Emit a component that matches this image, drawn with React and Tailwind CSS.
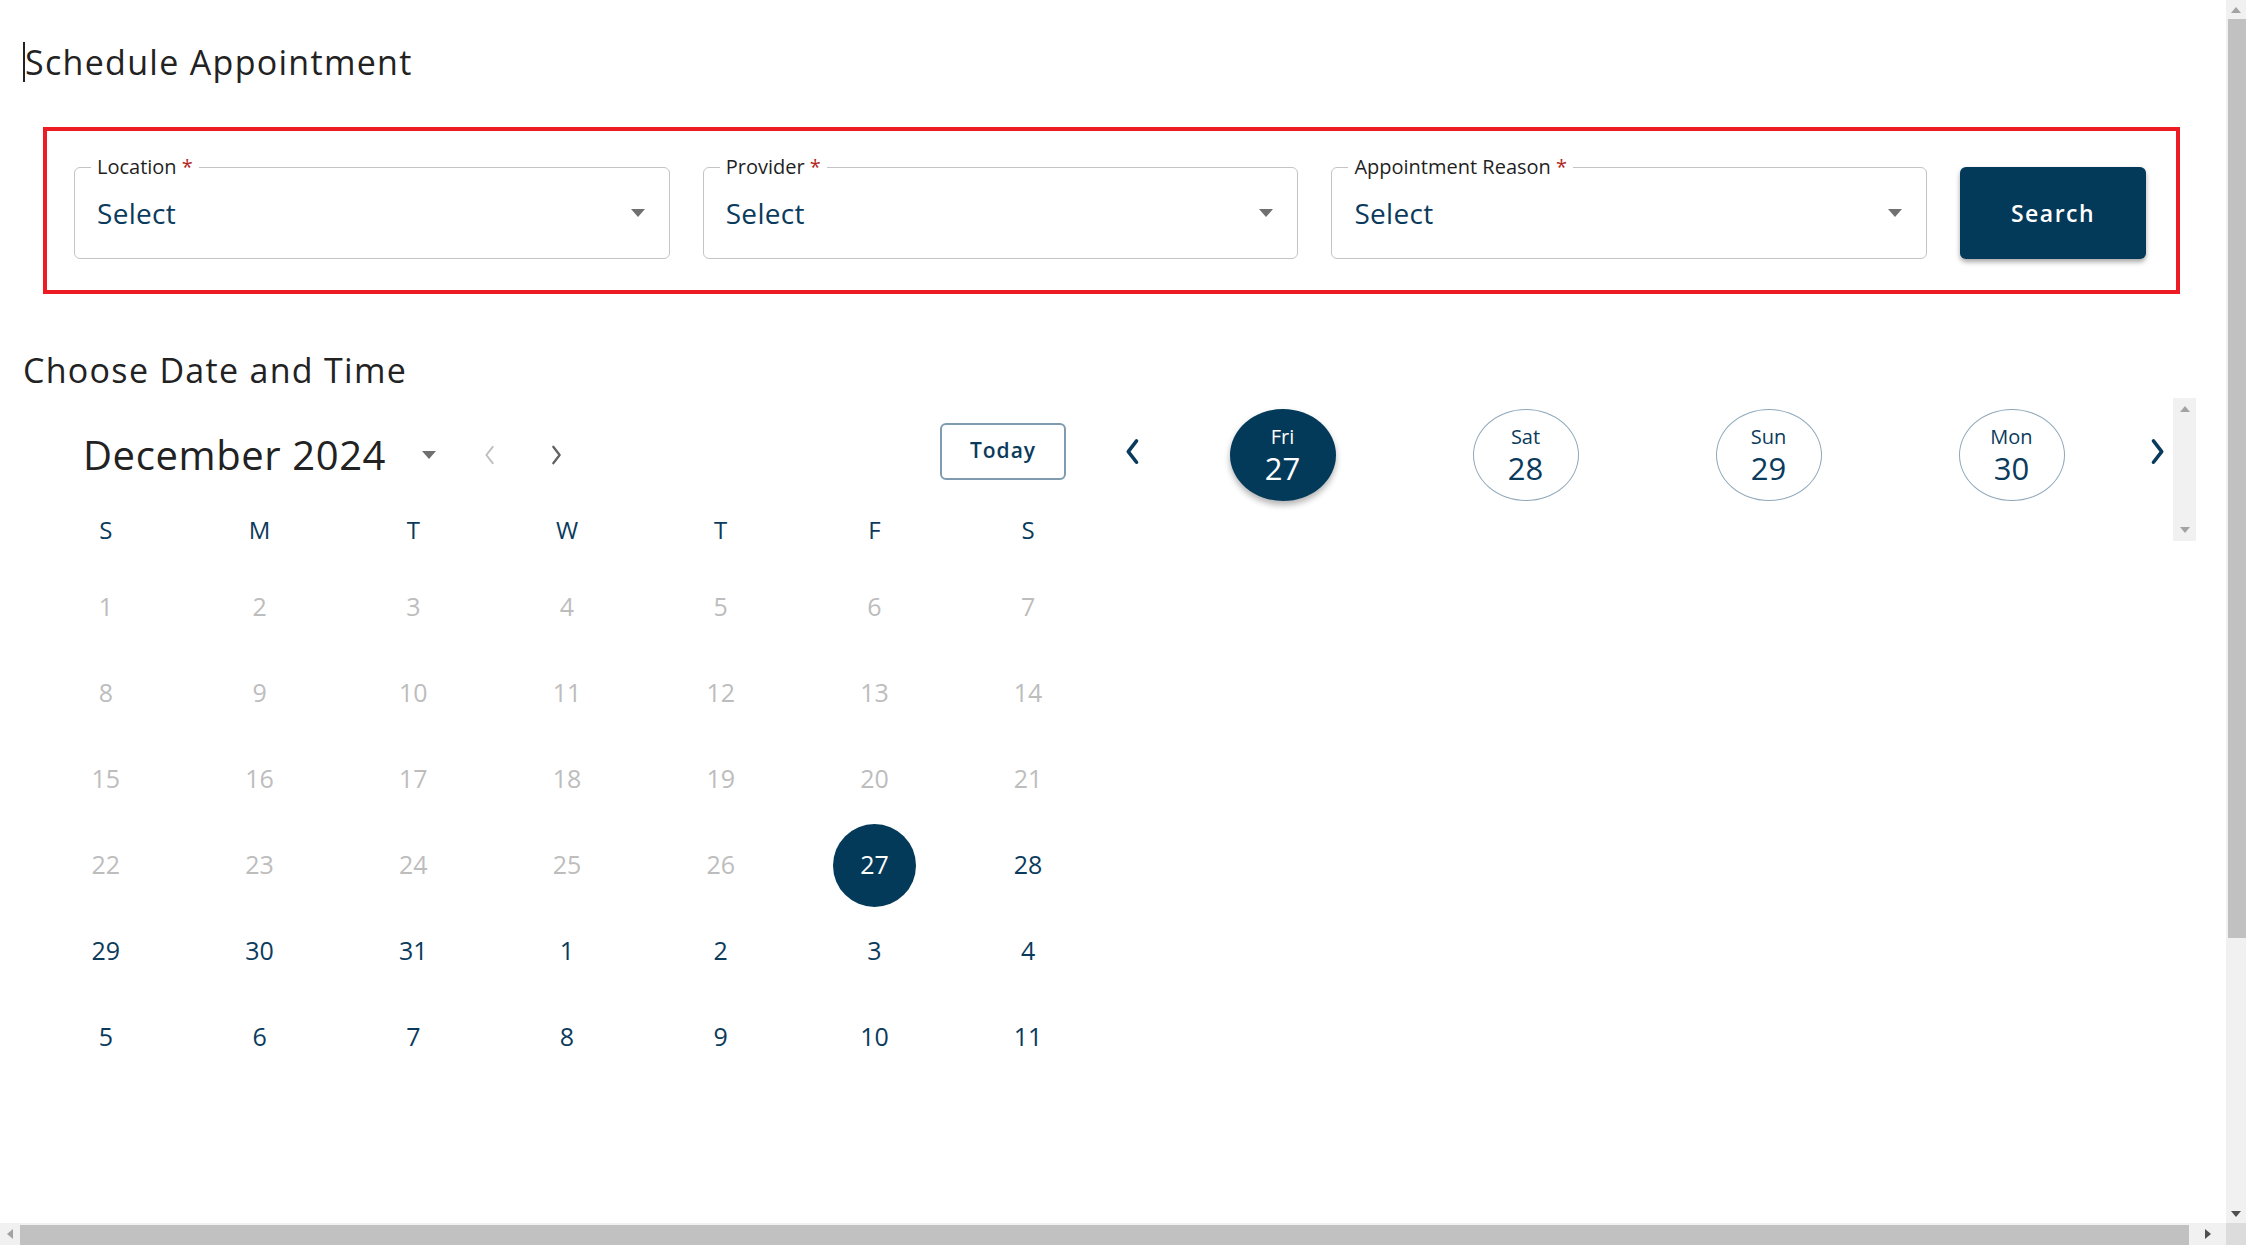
import React from 'react';

const NAVY = 'text-[#0b3b5c]';
const font = { fontFamily: '"Open Sans", "Noto Sans", sans-serif' };

const weeks = [
  [1, 2, 3, 4, 5, 6, 7],
  [8, 9, 10, 11, 12, 13, 14],
  [15, 16, 17, 18, 19, 20, 21],
  [22, 23, 24, 25, 26, 27, 28],
  [29, 30, 31, 1, 2, 3, 4],
  [5, 6, 7, 8, 9, 10, 11],
];

const strip = [
  { day: 'Fri', num: 27, active: true },
  { day: 'Sat', num: 28 },
  { day: 'Sun', num: 29 },
  { day: 'Mon', num: 30 },
];

function Caret({ className = '' }) {
  return (
    <svg width="14" height="8" viewBox="0 0 14 8" className={className}>
      <path d="M0 0 L14 0 L7 8 Z" fill="#707070" />
    </svg>
  );
}

function Chevron({ dir = 'left', color, size = 20, stroke = 2 }) {
  const d = dir === 'left' ? 'M14 3 L7 12 L14 21' : 'M8 3 L15 12 L8 21';
  return (
    <svg width={size} height={size * 1.2} viewBox="0 0 22 24">
      <path d={d} fill="none" stroke={color} strokeWidth={stroke} strokeLinecap="round" strokeLinejoin="round" />
    </svg>
  );
}

function SelectField({ label }) {
  return (
    <div className="relative h-[92px] w-[596px] rounded-md border border-[#c4c4c4]">
      <span className="absolute left-[16px] top-[-14px] bg-white px-[6px] text-[20px] leading-[26px] text-[#1f1f1f]">
        {label} <span className="text-[#b3261e]">*</span>
      </span>
      <div className="flex h-full items-center justify-between pl-[22px] pr-[24px]">
        <span className={`text-[28px] tracking-[0.3px] ${NAVY}`}>Select</span>
        <Caret />
      </div>
    </div>
  );
}

export default function App() {
  return (
    <div className="flex h-[1245px] w-[2246px] flex-col overflow-hidden bg-white" style={font}>
      <div className="flex flex-1 overflow-hidden">
        <div className="flex-1 pl-[23px]">
          <div className="mt-[42px] h-[40px] border-l-2 border-[#222] text-[34px] leading-[40px] tracking-[1.3px] text-[#222]">
            Schedule Appointment
          </div>

          <div className="ml-[20px] mt-[45px] w-[2137px] border-4 border-[#ed1c24] pb-[31px] pl-[27px] pr-[30px] pt-[36px]">
            <div className="flex gap-[33px]">
              <SelectField label="Location" />
              <SelectField label="Provider" />
              <SelectField label="Appointment Reason" />
              <button className="h-[92px] w-[186px] rounded-md bg-[#033a5a] text-[23px] font-semibold tracking-[1.5px] text-white shadow-[0_3px_5px_rgba(0,0,0,0.35)]">
                Search
              </button>
            </div>
          </div>

          <div className="mt-[56px] h-[40px] text-[34px] leading-[40px] tracking-[1.3px] text-[#222]">Choose Date and Time</div>

          <div className="flex">
            <div className="ml-[6px] w-[1076px] pt-[25px]">
              <div className="flex h-[80px] items-center pl-[54px] pr-[39px]">
                <span className="text-[40px] tracking-[0.6px] text-[#222]">December 2024</span>
                <Caret className="ml-[36px]" />
                <div className="ml-[44px]">
                  <Chevron dir="left" color="#bdbdbd" size={20} stroke={2} />
                </div>
                <div className="ml-[46px]">
                  <Chevron dir="right" color="#616161" size={20} stroke={2.5} />
                </div>
                <button className={`mb-[8px] ml-auto h-[57px] w-[126px] rounded-md border-2 border-[#7f9bb0] text-[21px] font-semibold tracking-[1px] ${NAVY}`}>
                  Today
                </button>
              </div>

              <div className="grid h-[69px] grid-cols-7 items-center">
                {['S', 'M', 'T', 'W', 'T', 'F', 'S'].map((d, i) => (
                  <div key={i} className={`text-center text-[24px] ${NAVY}`}>{d}</div>
                ))}
              </div>

              {weeks.map((row, ri) => (
                <div key={ri} className="grid h-[86px] grid-cols-7">
                  {row.map((n, ci) => {
                    const disabled = ri < 3 || (ri === 3 && ci < 5);
                    const selected = ri === 3 && n === 27;
                    return (
                      <div key={ci} className="flex items-center justify-center">
                        {selected ? (
                          <div className="flex h-[83px] w-[83px] items-center justify-center rounded-full bg-[#033a5a] text-[25px] text-white">
                            {n}
                          </div>
                        ) : (
                          <span className={`text-[25px] ${disabled ? 'text-[#bdbdbd]' : 'text-[#0b3b5c]'}`}>{n}</span>
                        )}
                      </div>
                    );
                  })}
                </div>
              ))}
            </div>

            <div className="mt-[8px] flex h-[143px]">
              <div className="mt-[8px] flex h-[92px] w-[56px] items-center justify-center">
                <Chevron dir="left" color="#0b3b5c" size={26} stroke={3} />
              </div>
              {strip.map((s) => (
                <div key={s.num} className="mt-[11px] flex w-[243px] justify-center">
                  <div
                    className={`flex h-[92px] w-[106px] flex-col items-center justify-center rounded-[50%] ${
                      s.active
                        ? 'bg-[#033a5a] text-white shadow-[0_4px_6px_rgba(0,0,0,0.3)]'
                        : 'border border-[#8fa8ba] text-[#0b3b5c]'
                    }`}
                  >
                    <span className="text-[20px] leading-[26px]">{s.day}</span>
                    <span className="text-[31px] leading-[36px]">{s.num}</span>
                  </div>
                </div>
              ))}
              <div className="mt-[8px] flex h-[92px] w-[40px] items-center justify-center pl-[8px]">
                <Chevron dir="right" color="#0b3b5c" size={26} stroke={3} />
              </div>
              <div className="flex h-[143px] w-[23px] flex-col items-center justify-between bg-[#f1f1f1] py-[8px]">
                <svg width="10" height="6" viewBox="0 0 10 6"><path d="M0 6 L10 6 L5 0 Z" fill="#a3a3a3" /></svg>
                <svg width="10" height="6" viewBox="0 0 10 6"><path d="M0 0 L10 0 L5 6 Z" fill="#a3a3a3" /></svg>
              </div>
            </div>
          </div>
        </div>

        <div className="flex w-[20px] flex-col bg-[#f1f1f1]">
          <div className="flex h-[19px] items-center justify-center">
            <svg width="10" height="6" viewBox="0 0 10 6"><path d="M0 6 L10 6 L5 0 Z" fill="#a3a3a3" /></svg>
          </div>
          <div className="ml-[2px] h-[919px] bg-[#c1c1c1]" />
          <div className="flex-1" />
          <div className="flex h-[19px] items-center justify-center">
            <svg width="10" height="6" viewBox="0 0 10 6"><path d="M0 0 L10 0 L5 6 Z" fill="#505050" /></svg>
          </div>
        </div>
      </div>

      <div className="flex h-[22px] bg-[#f1f1f1]">
        <div className="flex w-[20px] items-center justify-center">
          <svg width="6" height="10" viewBox="0 0 6 10"><path d="M6 0 L6 10 L0 5 Z" fill="#a3a3a3" /></svg>
        </div>
        <div className="mt-[2px] h-[20px] w-[2169px] bg-[#c1c1c1]" />
        <div className="flex flex-1 items-center justify-center">
          <svg width="6" height="10" viewBox="0 0 6 10"><path d="M0 0 L0 10 L6 5 Z" fill="#505050" /></svg>
        </div>
        <div className="w-[20px] bg-[#dcdcdc]" />
      </div>
    </div>
  );
}
